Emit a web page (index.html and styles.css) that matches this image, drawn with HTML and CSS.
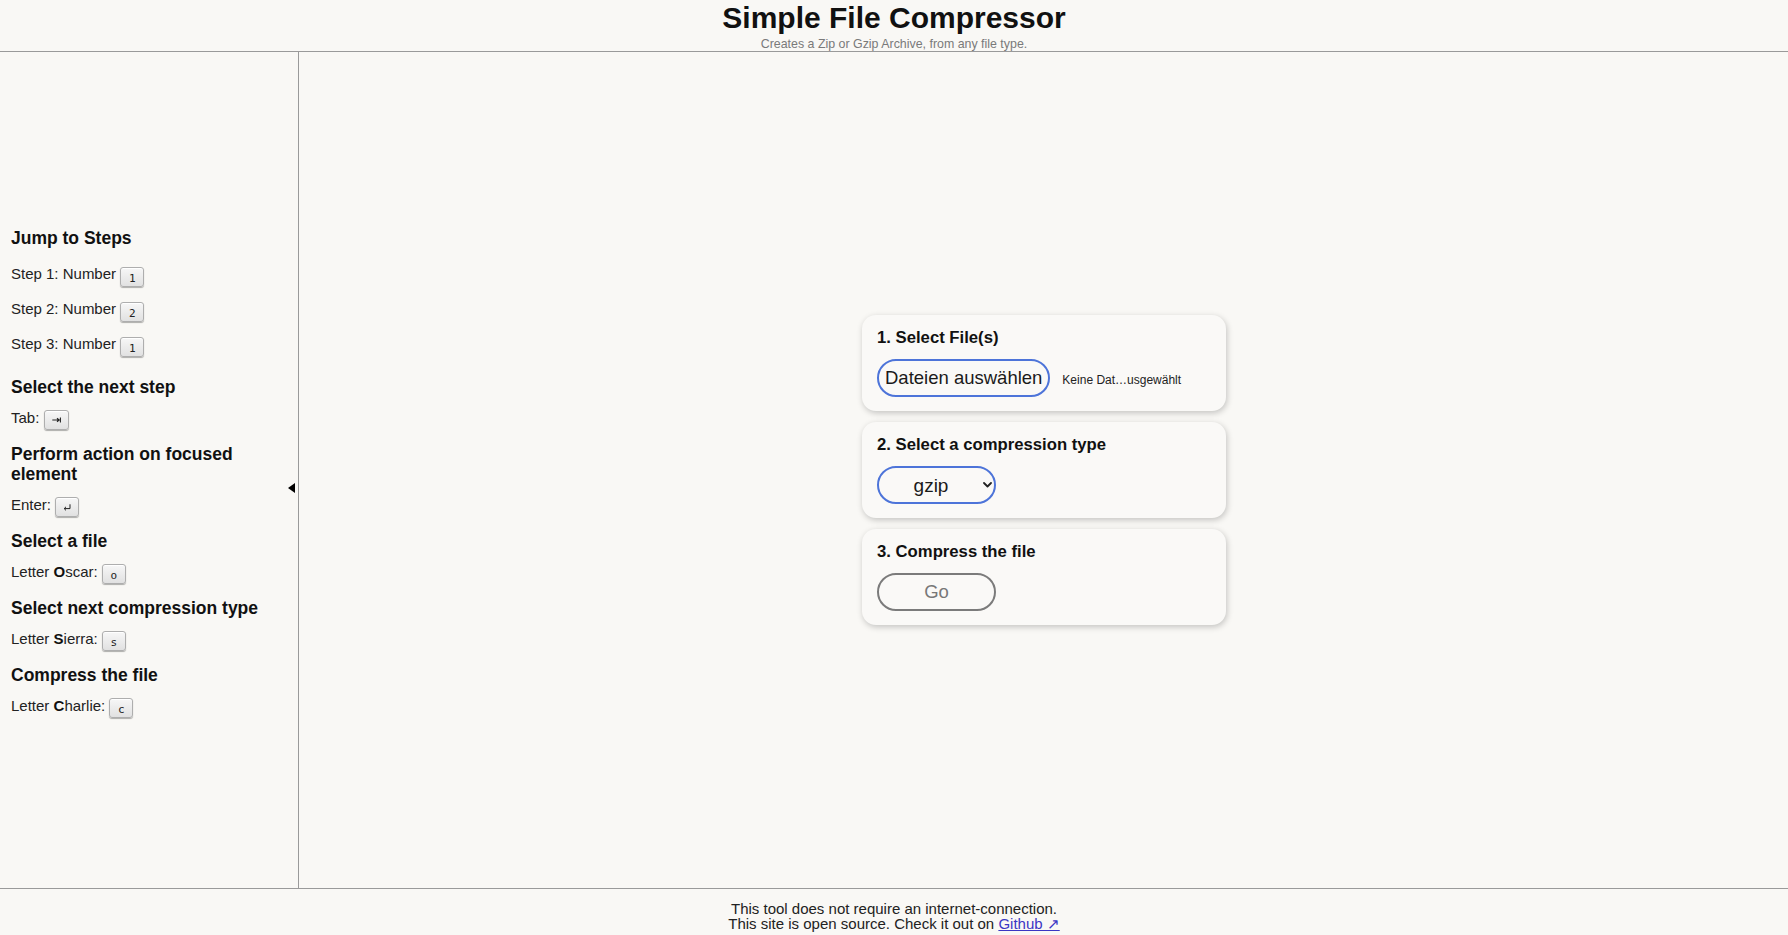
FILE: index.html
```html
<!DOCTYPE html>
<html lang="en">
<head>
<meta charset="utf-8">
<title>Simple File Compressor</title>
<link rel="stylesheet" href="styles.css">
</head>
<body>
<header class="top">
  <h1 class="title">Simple File Compressor</h1>
  <p class="subtitle">Creates a Zip or Gzip Archive, from any file type.</p>
</header>
<div class="layout">
  <aside class="sidebar">
    <div class="shortcuts">
      <section class="group">
        <h3 class="group-title">Jump to Steps</h3>
        <div class="steps">
          <p class="row">Step 1: Number <kbd class="key">1</kbd></p>
          <p class="row">Step 2: Number <kbd class="key">2</kbd></p>
          <p class="row">Step 3: Number <kbd class="key">1</kbd></p>
        </div>
      </section>
      <section class="group">
        <h3 class="group-title">Select the next step</h3>
        <p class="row">Tab: <kbd class="key key-sym" aria-label="Tab"><svg class="key-icon" width="9" height="6" viewBox="0 0 9 6" aria-hidden="true"><path d="M0.3 3 H7.2 M5 1.2 L7.2 3 L5 4.8 M8.4 0.6 V5.4" fill="none" stroke="#222" stroke-width="1.1"/></svg></kbd></p>
      </section>
      <section class="group">
        <h3 class="group-title">Perform action on focused element</h3>
        <p class="row">Enter: <kbd class="key key-sym" aria-label="Enter"><svg class="key-icon" width="8" height="7" viewBox="0 0 8 7" aria-hidden="true"><path d="M7 0.3 V4.6 H1.2 M3 2.8 L1.2 4.6 L3 6.4" fill="none" stroke="#222" stroke-width="1"/></svg></kbd></p>
      </section>
      <section class="group">
        <h3 class="group-title">Select a file</h3>
        <p class="row">Letter <b>O</b>scar: <kbd class="key">o</kbd></p>
      </section>
      <section class="group">
        <h3 class="group-title">Select next compression type</h3>
        <p class="row">Letter <b>S</b>ierra: <kbd class="key">s</kbd></p>
      </section>
      <section class="group">
        <h3 class="group-title">Compress the file</h3>
        <p class="row">Letter <b>C</b>harlie: <kbd class="key">c</kbd></p>
      </section>
    </div>
    <span class="collapse" aria-label="Collapse sidebar"></span>
  </aside>
  <main class="main">
    <div class="cards">
      <section class="card">
        <h2 class="card-title">1. Select File(s)</h2>
        <div class="file-row">
          <button class="pill pill-blue file-btn" type="button">Dateien auswählen</button>
          <span class="file-status">Keine Dat…usgewählt</span>
        </div>
      </section>
      <section class="card">
        <h2 class="card-title">2. Select a compression type</h2>
        <div class="select-wrap">
          <select class="pill pill-blue type-select">
            <option>gzip</option>
            <option>zip</option>
          </select>
          <svg class="chevron" width="9" height="6" viewBox="0 0 9 6" aria-hidden="true"><path d="M1 1 L4.5 4.5 L8 1" fill="none" stroke="#222" stroke-width="1.8" stroke-linecap="round" stroke-linejoin="round"/></svg>
        </div>
      </section>
      <section class="card">
        <h2 class="card-title">3. Compress the file</h2>
        <button class="pill pill-gray go-btn" type="button" disabled>Go</button>
      </section>
    </div>
  </main>
</div>
<footer class="bottom">
  <p class="foot-line">This tool does not require an internet-connection.</p>
  <p class="foot-line">This site is open source. Check it out on <a class="foot-link" href="#">Github &#8599;</a></p>
</footer>
</body>
</html>
```

FILE: styles.css
```css
* { box-sizing: border-box; }

html, body {
  margin: 0;
  height: 100%;
}

body {
  background: #f9f8f5;
  color: #222;
  font-family: "Liberation Sans", Arial, sans-serif;
  display: flex;
  flex-direction: column;
  overflow: hidden;
}

/* Header */
.top {
  padding: 2px 0 0.5px;
  border-bottom: 1px solid #9a9a9a;
  text-align: center;
}

.title {
  margin: 0;
  font-size: 30px;
  line-height: 32px;
  font-weight: bold;
  color: #111;
}

.subtitle {
  margin: 2.5px 0 0;
  font-size: 12.4px;
  line-height: 14px;
  color: #7a7a7a;
}

/* Layout */
.layout {
  flex: 1;
  display: flex;
  min-height: 0;
}

.sidebar {
  position: relative;
  width: 299px;
  flex: none;
  border-right: 1px solid #9a9a9a;
  padding: 4px 12px 0 11px;
  display: flex;
  flex-direction: column;
  justify-content: center;
}

.shortcuts {
  display: flex;
  flex-direction: column;
  gap: 16.5px;
}

.group-title {
  margin: 0 0 10.5px;
  font-size: 17.5px;
  line-height: 20px;
  font-weight: bold;
  color: #111;
}

.steps {
  display: flex;
  flex-direction: column;
  gap: 15px;
  padding: 5.5px 0 6.5px;
}

.row {
  margin: 0;
  height: 20px;
  font-size: 15px;
  line-height: 20px;
  color: #222;
}

.row b { color: #111; }

.key {
  display: inline-block;
  vertical-align: -2.3px;
  min-width: 24px;
  height: 20px;
  padding: 4px 7px 0;
  font-family: "DejaVu Sans Mono", "Liberation Mono", monospace;
  font-size: 11px;
  line-height: 14px;
  text-align: center;
  color: #222;
  background: linear-gradient(#f7f7f7, #e1e1e1);
  border: 1px solid #aeaeae;
  border-radius: 3px;
  box-shadow: 0 1px 1px rgba(0, 0, 0, 0.3), inset 0 1px 0 #fff;
}

.key-sym {
  padding: 0 7px;
  line-height: 18px;
  vertical-align: -0.3px;
}

.key-icon {
  display: inline-block;
  vertical-align: middle;
}

.collapse {
  position: absolute;
  right: 3px;
  top: 431px;
  width: 0;
  height: 0;
  border-top: 5px solid transparent;
  border-bottom: 5px solid transparent;
  border-right: 7px solid #000;
}

/* Main */
.main {
  flex: 1;
  display: flex;
  align-items: center;
  justify-content: center;
}

.cards {
  width: 364px;
  margin-left: 1px;
  display: flex;
  flex-direction: column;
  gap: 11px;
}

.card {
  background: #faf9f7;
  border-radius: 14px;
  box-shadow: 1px 2px 6px rgba(0, 0, 0, 0.22);
  padding: 13px 15px 14px;
}

.card-title {
  margin: 0 0 12px;
  font-size: 16.7px;
  line-height: 19px;
  font-weight: bold;
  color: #111;
}

.pill {
  height: 38px;
  border-radius: 19px;
  border: 2px solid #4d74d9;
  background: transparent;
  font-family: "Liberation Sans", Arial, sans-serif;
  color: #1a1a1a;
  margin: 0;
}

.file-row {
  display: flex;
  align-items: baseline;
  gap: 12px;
}

.file-btn {
  padding: 0 6px;
  font-size: 18.5px;
  line-height: 34px;
}

.file-status {
  font-size: 12px;
  color: #222;
}

.select-wrap {
  position: relative;
  width: 119px;
}

.type-select {
  appearance: none;
  -webkit-appearance: none;
  display: block;
  width: 100%;
  padding: 0 11px 0 0;
  font-size: 19px;
  text-align: center;
  text-align-last: center;
}

.chevron {
  position: absolute;
  right: 4px;
  top: 16px;
  pointer-events: none;
}

.pill-gray {
  border-color: #7b7b7b;
  color: #777;
}

.go-btn {
  display: block;
  width: 119px;
  padding: 0;
  font-size: 18.5px;
  line-height: 34px;
}

/* Footer */
.bottom {
  border-top: 1px solid #9a9a9a;
  padding: 12px 0 4px;
  text-align: center;
}

.foot-line {
  margin: 0;
  font-size: 15px;
  line-height: 15px;
  color: #222;
}

.foot-link {
  color: #3b36c4;
  text-decoration: underline;
}
```
